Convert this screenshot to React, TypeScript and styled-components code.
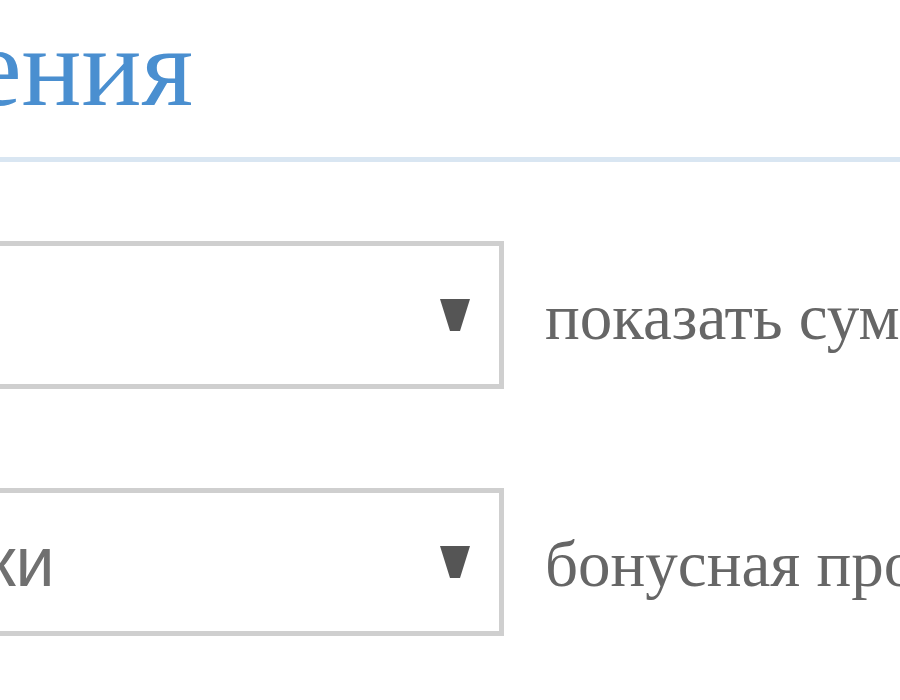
import React from "react";
import styled, { createGlobalStyle } from "styled-components";

const Global = createGlobalStyle`
  html, body {
    margin: 0;
    padding: 0;
    background: #ffffff;
    overflow: hidden;
  }
  #root {
    width: 900px;
    height: 700px;
    overflow: hidden;
  }
`;

const Page = styled.div`
  width: 900px;
  height: 700px;
  overflow: hidden;
  padding-top: 12px;
  box-sizing: border-box;
`;

const Header = styled.header`
  border-bottom: 5px solid #d9e6f2;
  padding-bottom: 35px;
`;

const TitleBar = styled.div`
  display: flex;
  justify-content: flex-end;
  width: 193px;
`;

const Title = styled.h1`
  margin: 0;
  font-family: "Liberation Serif", "Times New Roman", serif;
  font-weight: normal;
  font-size: 112px;
  line-height: 110px;
  color: #4a8fd0;
  white-space: nowrap;
  flex-shrink: 0;
`;

const Form = styled.div`
  margin-left: -551px;
  display: flex;
  flex-direction: column;
`;

const Row = styled.div<{ $gap: number }>`
  display: flex;
  align-items: baseline;
  margin-top: ${(p) => p.$gap}px;
  white-space: nowrap;
`;

const SelectBox = styled.div`
  box-sizing: border-box;
  flex-shrink: 0;
  width: 1055px;
  height: 148px;
  border: 5px solid #cfcfcf;
  background: #fff;
  display: flex;
  align-items: center;
  justify-content: space-between;
  padding: 0 29px 0 60px;
`;

const SelectText = styled.span`
  font-family: "Liberation Sans", Arial, sans-serif;
  font-size: 70px;
  line-height: 80px;
  color: #707070;
`;

const Caret = styled.svg`
  width: 30px;
  height: 32px;
  flex-shrink: 0;
  display: block;
`;

const Label = styled.span`
  margin-left: 41px;
  font-family: "Liberation Serif", "Times New Roman", serif;
  font-size: 65px;
  color: #666666;
`;

const Arrow = () => (
  <Caret viewBox="0 0 30 32">
    <polygon points="0,0 30,0 20,32 10,32" fill="#555555" />
  </Caret>
);

const fields = [
  { value: "Нет", label: "показать сумму", gap: 79 },
  { value: "Получать скидки", label: "бонусная программа", gap: 99 },
];

export default function App() {
  return (
    <>
      <Global />
      <Page>
        <Header>
          <TitleBar>
            <Title>Уведомления</Title>
          </TitleBar>
        </Header>
        <Form>
          {fields.map((f) => (
            <Row key={f.label} $gap={f.gap}>
              <SelectBox>
                <SelectText>{f.value}</SelectText>
                <Arrow />
              </SelectBox>
              <Label>{f.label}</Label>
            </Row>
          ))}
        </Form>
      </Page>
    </>
  );
}
